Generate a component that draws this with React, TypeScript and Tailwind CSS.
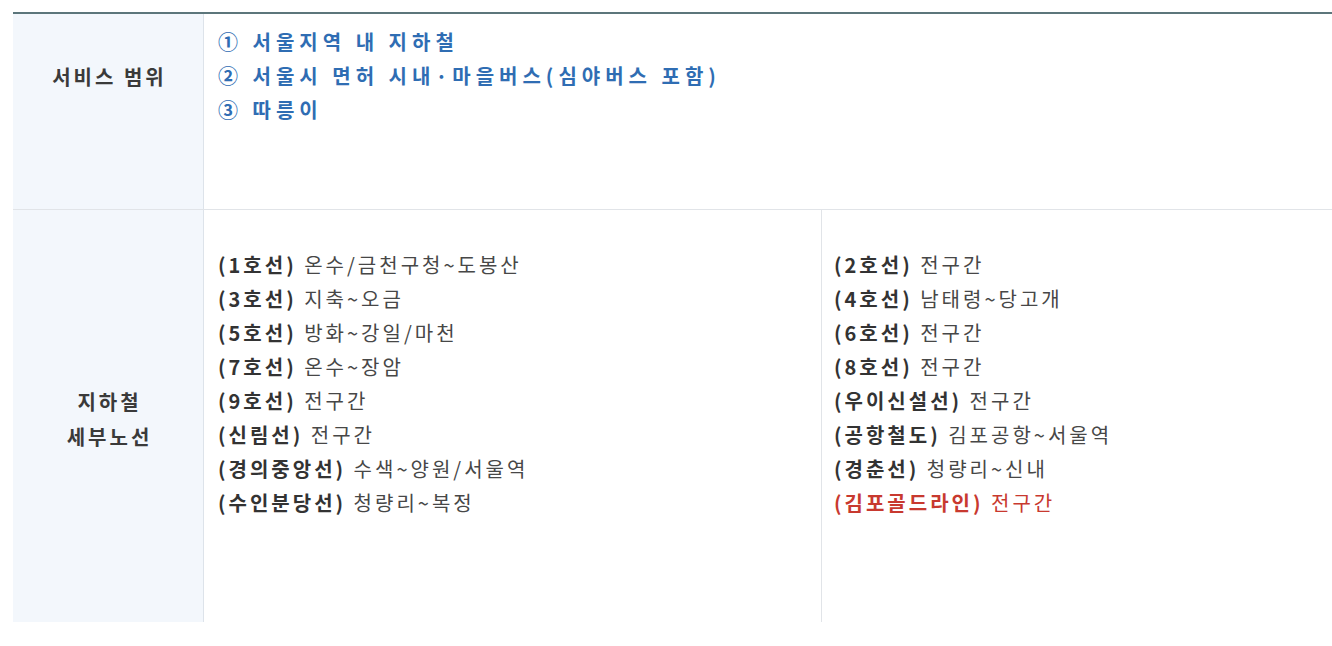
import React from "react";

const leftLines: [string, string][] = [
  ["(1호선)", "온수/금천구청~도봉산"],
  ["(3호선)", "지축~오금"],
  ["(5호선)", "방화~강일/마천"],
  ["(7호선)", "온수~장암"],
  ["(9호선)", "전구간"],
  ["(신림선)", "전구간"],
  ["(경의중앙선)", "수색~양원/서울역"],
  ["(수인분당선)", "청량리~복정"],
];

const rightLines: [string, string][] = [
  ["(2호선)", "전구간"],
  ["(4호선)", "남태령~당고개"],
  ["(6호선)", "전구간"],
  ["(8호선)", "전구간"],
  ["(우이신설선)", "전구간"],
  ["(공항철도)", "김포공항~서울역"],
  ["(경춘선)", "청량리~신내"],
];

function Line({ label, text, red }: { label: string; text: string; red?: boolean }) {
  return (
    <li className={red ? "text-[#c8392f]" : "text-[#474747]"}>
      <span className={red ? "font-bold" : "font-bold text-[#333]"}>{label}</span> {text}
    </li>
  );
}

export default function App() {
  return (
    <div
      className="bg-white w-[1332px] h-[646px] overflow-hidden pt-[12px] pl-[13px]"
      style={{ fontFamily: '"Noto Sans CJK KR", "Noto Sans", sans-serif' }}
    >
      <div className="border-t-2 border-[#5c767b] text-[20px] tracking-[3px]">
        {/* service scope */}
        <div className="flex h-[196px] border-b border-[#e1e4e8]">
          <div className="w-[191px] shrink-0 bg-[#f3f7fc] border-r border-[#dde3ea] pt-[46px] pl-[3px] text-center leading-[34px] font-bold text-[#3a3a3a]">
            서비스 범위
          </div>
          <ul className="pl-[14px] pt-[11px] leading-[34px] font-bold text-[#2f6db3] tracking-[5px]">
            <li>① 서울지역 내 지하철</li>
            <li>② 서울시 면허 시내·마을버스(심야버스 포함)</li>
            <li>③ 따릉이</li>
          </ul>
        </div>

        {/* subway lines */}
        <div className="flex h-[412px]">
          <div className="w-[191px] shrink-0 bg-[#f3f7fc] border-r border-[#dde3ea] pt-[5px] pl-[3px] flex flex-col items-center justify-center leading-[35px] font-bold text-[#3a3a3a]">
            <span>지하철</span>
            <span>세부노선</span>
          </div>
          <ul className="w-[618px] shrink-0 border-r border-[#e1e4e8] pl-[14px] pt-[38px] leading-[34px]">
            {leftLines.map(([l, t]) => (
              <Line key={l} label={l} text={t} />
            ))}
          </ul>
          <ul className="pl-[12px] pt-[38px] leading-[34px]">
            {rightLines.map(([l, t]) => (
              <Line key={l} label={l} text={t} />
            ))}
            <Line label="(김포골드라인)" text="전구간" red />
          </ul>
        </div>
      </div>
    </div>
  );
}
